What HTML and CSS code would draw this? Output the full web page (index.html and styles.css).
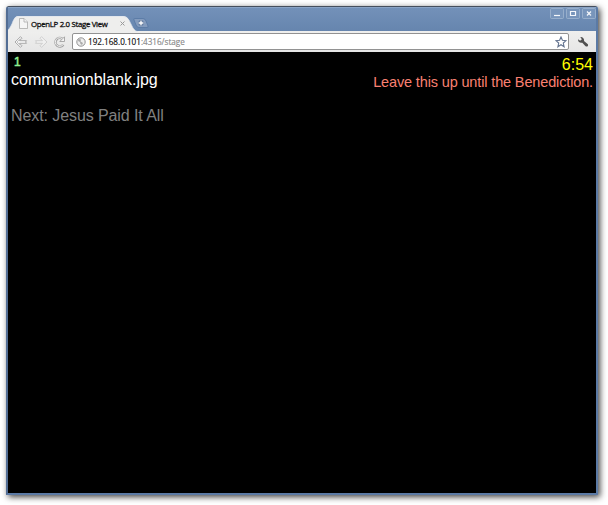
FILE: index.html
```html
<!DOCTYPE html>
<html lang="en">
<head>
<meta charset="utf-8">
<title>OpenLP 2.0 Stage View</title>
<link rel="stylesheet" href="styles.css">
</head>
<body>
<div class="window">
  <header class="titlebar">
    <div class="tab">
      <svg class="tab-shape" width="145" height="16" viewBox="0 0 145 16">
        <path d="M0 16V14C2 12 4 8 5 5Q7 0 10 0H115Q119 0 121 4L125 12Q127 15 130 16Z" fill="#eeeeed"/>
        <path d="M0 14C2 12 4 8 5 5Q7 .5 10 .5H115Q119 .5 121 4L125 12Q127 15 130 16" fill="none" stroke="#dce3ed" stroke-width=".6"/>
      </svg>
      <svg class="doc" width="9" height="11" viewBox="0 0 9 11" fill="#f5f5f5" stroke="#aaa" stroke-width=".8"><path d="M.5.5H5L8.5 4V10.5H.5Z"/><path d="M5 .5V4H8.5"/></svg>
      <span class="tab-title">OpenLP 2.0 Stage View</span>
      <svg class="tab-close" width="5" height="5" viewBox="0 0 5 5" stroke="#999" stroke-width="1"><path d="M.5.5l4 4M4.5.5l-4 4"/></svg>
    </div>
    <svg class="new-tab" width="16" height="11" viewBox="0 0 16 11">
      <path d="M1.5.5H10Q12 .5 13 3L15 8Q15.500 9.500 14 9.500H6Q4 9.500 3 7L1 2Q.5.5 1.500.5Z" fill="#839bbd" stroke="#5676a2" stroke-width=".8"/>
      <path d="M8 2V8M5 5H11" stroke="#4b668d" stroke-width="2.600"/>
      <path d="M8 2.500V7.500M5.500 5H10.500" stroke="#fff" stroke-width="1.400"/>
    </svg>
    <div class="controls">
      <svg width="14" height="11" viewBox="0 0 14 11"><rect x=".5" y=".5" width="13" height="10" rx="1"/><path d="M4 7.500H10"/></svg>
      <svg width="14" height="11" viewBox="0 0 14 11"><rect x=".5" y=".5" width="13" height="10" rx="1"/><path d="M4.500 3.500H9.500V7.500H4.500Z"/></svg>
      <svg width="14" height="11" viewBox="0 0 14 11"><rect x=".5" y=".5" width="13" height="10" rx="1"/><path d="M5 3.500L9 7.500M9 3.500L5 7.500"/></svg>
    </div>
  </header>
  <nav class="toolbar">
    <svg class="nav-icon" width="14" height="12" viewBox="0 0 14 12"><path d="M6.500.7L1 6L6.500 11.300L8 9.800L5.500 7.300H12.500L11.500 6L12.500 4.700H5.500L8 2.200Z" fill="#f9f9f9" stroke="#a2a2a2" stroke-width=".9"/><path d="M6.500 2.700L3 6L6.500 9.300" fill="none" stroke="#aaa" stroke-width=".7"/></svg>
    <svg class="nav-icon faded" width="14" height="12" viewBox="0 0 14 12"><path d="M7.500.7L13 6L7.500 11.300L6 9.800L8.500 7.300H1.500L2.500 6L1.500 4.700H8.500L6 2.200Z" fill="#f9f9f9" stroke="#a2a2a2" stroke-width=".9"/></svg>
    <svg class="nav-icon" width="14" height="12" viewBox="0 0 14 12" fill="none"><path d="M10.300 8.800A4.300 4.300 0 1 1 9.300 2.700" stroke="#a2a2a2" stroke-width="2.500"/><path d="M11.500.8V5.500H6.800Z" fill="#f5f5f5" stroke="#a2a2a2" stroke-width=".9"/><path d="M10.100 8.600A4.300 4.300 0 1 1 9.300 2.700" stroke="#f5f5f5" stroke-width="1"/></svg>
    <div class="address">
      <svg width="10" height="10" viewBox="0 0 10 10"><circle cx="5" cy="5" r="4.200" fill="#eee" stroke="#929292" stroke-width="1"/><path d="M2.500 2L5 2.500L4.500 4.500L7 6L6 8L4.500 7L4 5L2 4Z" fill="#aaa"/></svg>
      <span class="url">192.168.0.101<span class="path">:4316/stage</span></span>
      <svg class="star" width="12" height="12" viewBox="0 0 12 12"><path d="M6 1L7.400 4.300L11 4.600L8.300 7L9.100 10.700L6 8.700L2.900 10.700L3.700 7L1 4.600L4.600 4.300Z" fill="#fff" stroke="#657590" stroke-width="1.100"/></svg>
    </div>
    <svg class="wrench" width="12" height="12" viewBox="0 0 12 12"><path d="M3.300 1.200Q5.500.7 6.700 2.700Q7.300 3.900 7 4.900L10.900 8.200Q11.500 9.600 10.400 10.400Q9.300 10.900 8.300 9.900L5.300 6.700Q3.100 7.200 1.700 5.700Q.9 4.700 1.200 3.200L3.100 4.700L4.900 3.200Z" fill="#505050"/></svg>
  </nav>
  <main class="stage">
    <section class="slide">
      <div class="verse">1</div>
      <div class="current">communionblank.jpg</div>
      <div class="next">Next: Jesus Paid It All</div>
    </section>
    <aside class="side">
      <div class="clock">6:54</div>
      <div class="notes">Leave this up until the Benediction.</div>
    </aside>
  </main>
</div>
</body>
</html>
```
FILE: styles.css
```css
* { box-sizing: border-box; }
html, body { margin: 0; height: 505px; overflow: hidden; background: #fff; }
body { padding: 6px 10px 10px 6px; }
svg { display: block; flex: none; }
.window {
  width: 592px;
  height: 489px;
  display: flex;
  flex-direction: column;
  border: 2px solid #5b7aa5;
  border-top: 1px solid #454f5e;
  border-left-color: #526d94;
  border-radius: 3px 3px 0 0;
  background: #6b89b0;
  box-shadow: 2px 2px 6px rgba(0, 0, 0, .75);
}
.titlebar {
  height: 24px;
  flex: none;
  display: flex;
  align-items: flex-start;
  background: linear-gradient(#7391b9, #6685ae);
  border-top: 1px solid #89a3c5;
}
.tab {
  position: relative;
  width: 125px;
  height: 23px;
  padding: 8px 0 0 11px;
  display: flex;
  align-items: center;
}
.tab-shape { position: absolute; left: 0; bottom: -1px; }
.doc { position: relative; }
.tab-title {
  position: relative;
  width: 84px;
  margin-left: 3px;
  font: 7.800px/12px "Open Sans", sans-serif;
  letter-spacing: -.3px;
  -webkit-text-stroke: .3px #111;
  color: #111;
  white-space: nowrap;
}
.tab-close { position: relative; margin-left: 5px; }
.new-tab { margin-top: 10px; }
.controls { margin: 0 0 0 auto; display: flex; gap: 2px; }
.controls svg { fill: #7895bb; stroke: #a6bad3; stroke-width: .7; }
.controls path { fill: none; stroke: #f5f7fb; stroke-width: 1.200; }
.toolbar {
  height: 21px;
  flex: none;
  padding: 0 7px 0 6px;
  display: flex;
  align-items: center;
  background: linear-gradient(#efefee, #e6e6e6);
}
.nav-icon { margin-right: 6px; }
.nav-icon:nth-child(3) { position: relative; left: -1px; }
.nav-icon.faded { opacity: .4; }
.address {
  width: 498px;
  height: 17px;
  margin: 0 8px 0 -2px;
  padding: 0 1px 0 3px;
  display: flex;
  align-items: center;
  border: 1px solid #929292;
  border-radius: 2px;
  background: #fff;
}
.url { margin-left: 2px; font: 8.150px/13px "Open Sans", sans-serif; color: #111; -webkit-text-stroke: .15px currentColor; }
.path { color: #8a8a8a; }
.star { margin-left: auto; }
.stage {
  flex: 1;
  display: flex;
  justify-content: space-between;
  padding: 2px 3px;
  background: #000;
  font: 16px/18px "Liberation Sans", Arial, sans-serif;
}
.verse { height: 17px; padding-left: 3px; font-size: 12px; line-height: 17px; color: #90ee90; -webkit-text-stroke: .5px #90ee90; }
.current { color: #fff; }
.next { margin-top: 18px; color: #808080; letter-spacing: -.09px; }
.side { text-align: right; }
.clock { margin-top: 2px; color: #ff0; }
.notes { font-size: 14.500px; line-height: 16px; letter-spacing: -.14px; color: #fa8072; }
```
